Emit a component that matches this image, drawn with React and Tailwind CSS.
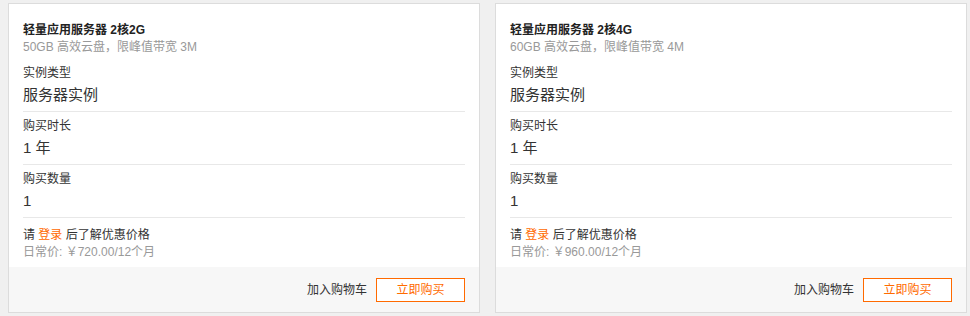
import React from "react";

const font = { fontFamily: '"Liberation Sans", "Noto Sans CJK SC", sans-serif' };

function Section({ label, value }) {
  return (
    <div className="pt-[5px] pb-[5px] border-b border-[#e8e8e8]">
      <div className="text-[12px] leading-[18px] text-[#333]">{label}</div>
      <div className="mt-[2px] text-[15px] leading-[22px] text-[#333]">{value}</div>
    </div>
  );
}

function Card({ title, desc, price }) {
  return (
    <div className="w-[472px] h-[310px] shrink-0 border border-[#dcdcdc] bg-white flex flex-col">
      <div className="flex-1 px-[14px] pt-[17px]">
        <div className="text-[12px] leading-[18px] font-bold text-[#222]">{title}</div>
        <div className="text-[12px] leading-[16px] text-[#999]">{desc}</div>
        <div className="mt-[4px]">
          <Section label="实例类型" value="服务器实例" />
          <Section label="购买时长" value="1 年" />
          <Section label="购买数量" value="1" />
        </div>
        <div className="mt-[8px] text-[12px] leading-[18px] text-[#333]">
          请 <span className="text-[#ff6a00]">登录</span> 后了解优惠价格
        </div>
        <div className="text-[12px] leading-[16px] text-[#999]">日常价: ￥{price}/12个月</div>
      </div>
      <div className="h-[45px] bg-[#f7f7f7] flex items-center justify-end gap-[9px] pr-[14px]">
        <span className="text-[12px] text-[#333]">加入购物车</span>
        <button className="w-[89px] h-[24px] border border-[#ff6a00] bg-white text-[12px] text-[#ff6a00] flex items-center justify-center">
          立即购买
        </button>
      </div>
    </div>
  );
}

export default function App() {
  return (
    <div style={font} className="w-[970px] h-[316px] bg-[#f0f0f0] flex gap-[15px] pl-[8px] pt-[3px] overflow-hidden">
      <Card title="轻量应用服务器 2核2G" desc="50GB 高效云盘，限峰值带宽 3M" price="720.00" />
      <Card title="轻量应用服务器 2核4G" desc="60GB 高效云盘，限峰值带宽 4M" price="960.00" />
    </div>
  );
}
